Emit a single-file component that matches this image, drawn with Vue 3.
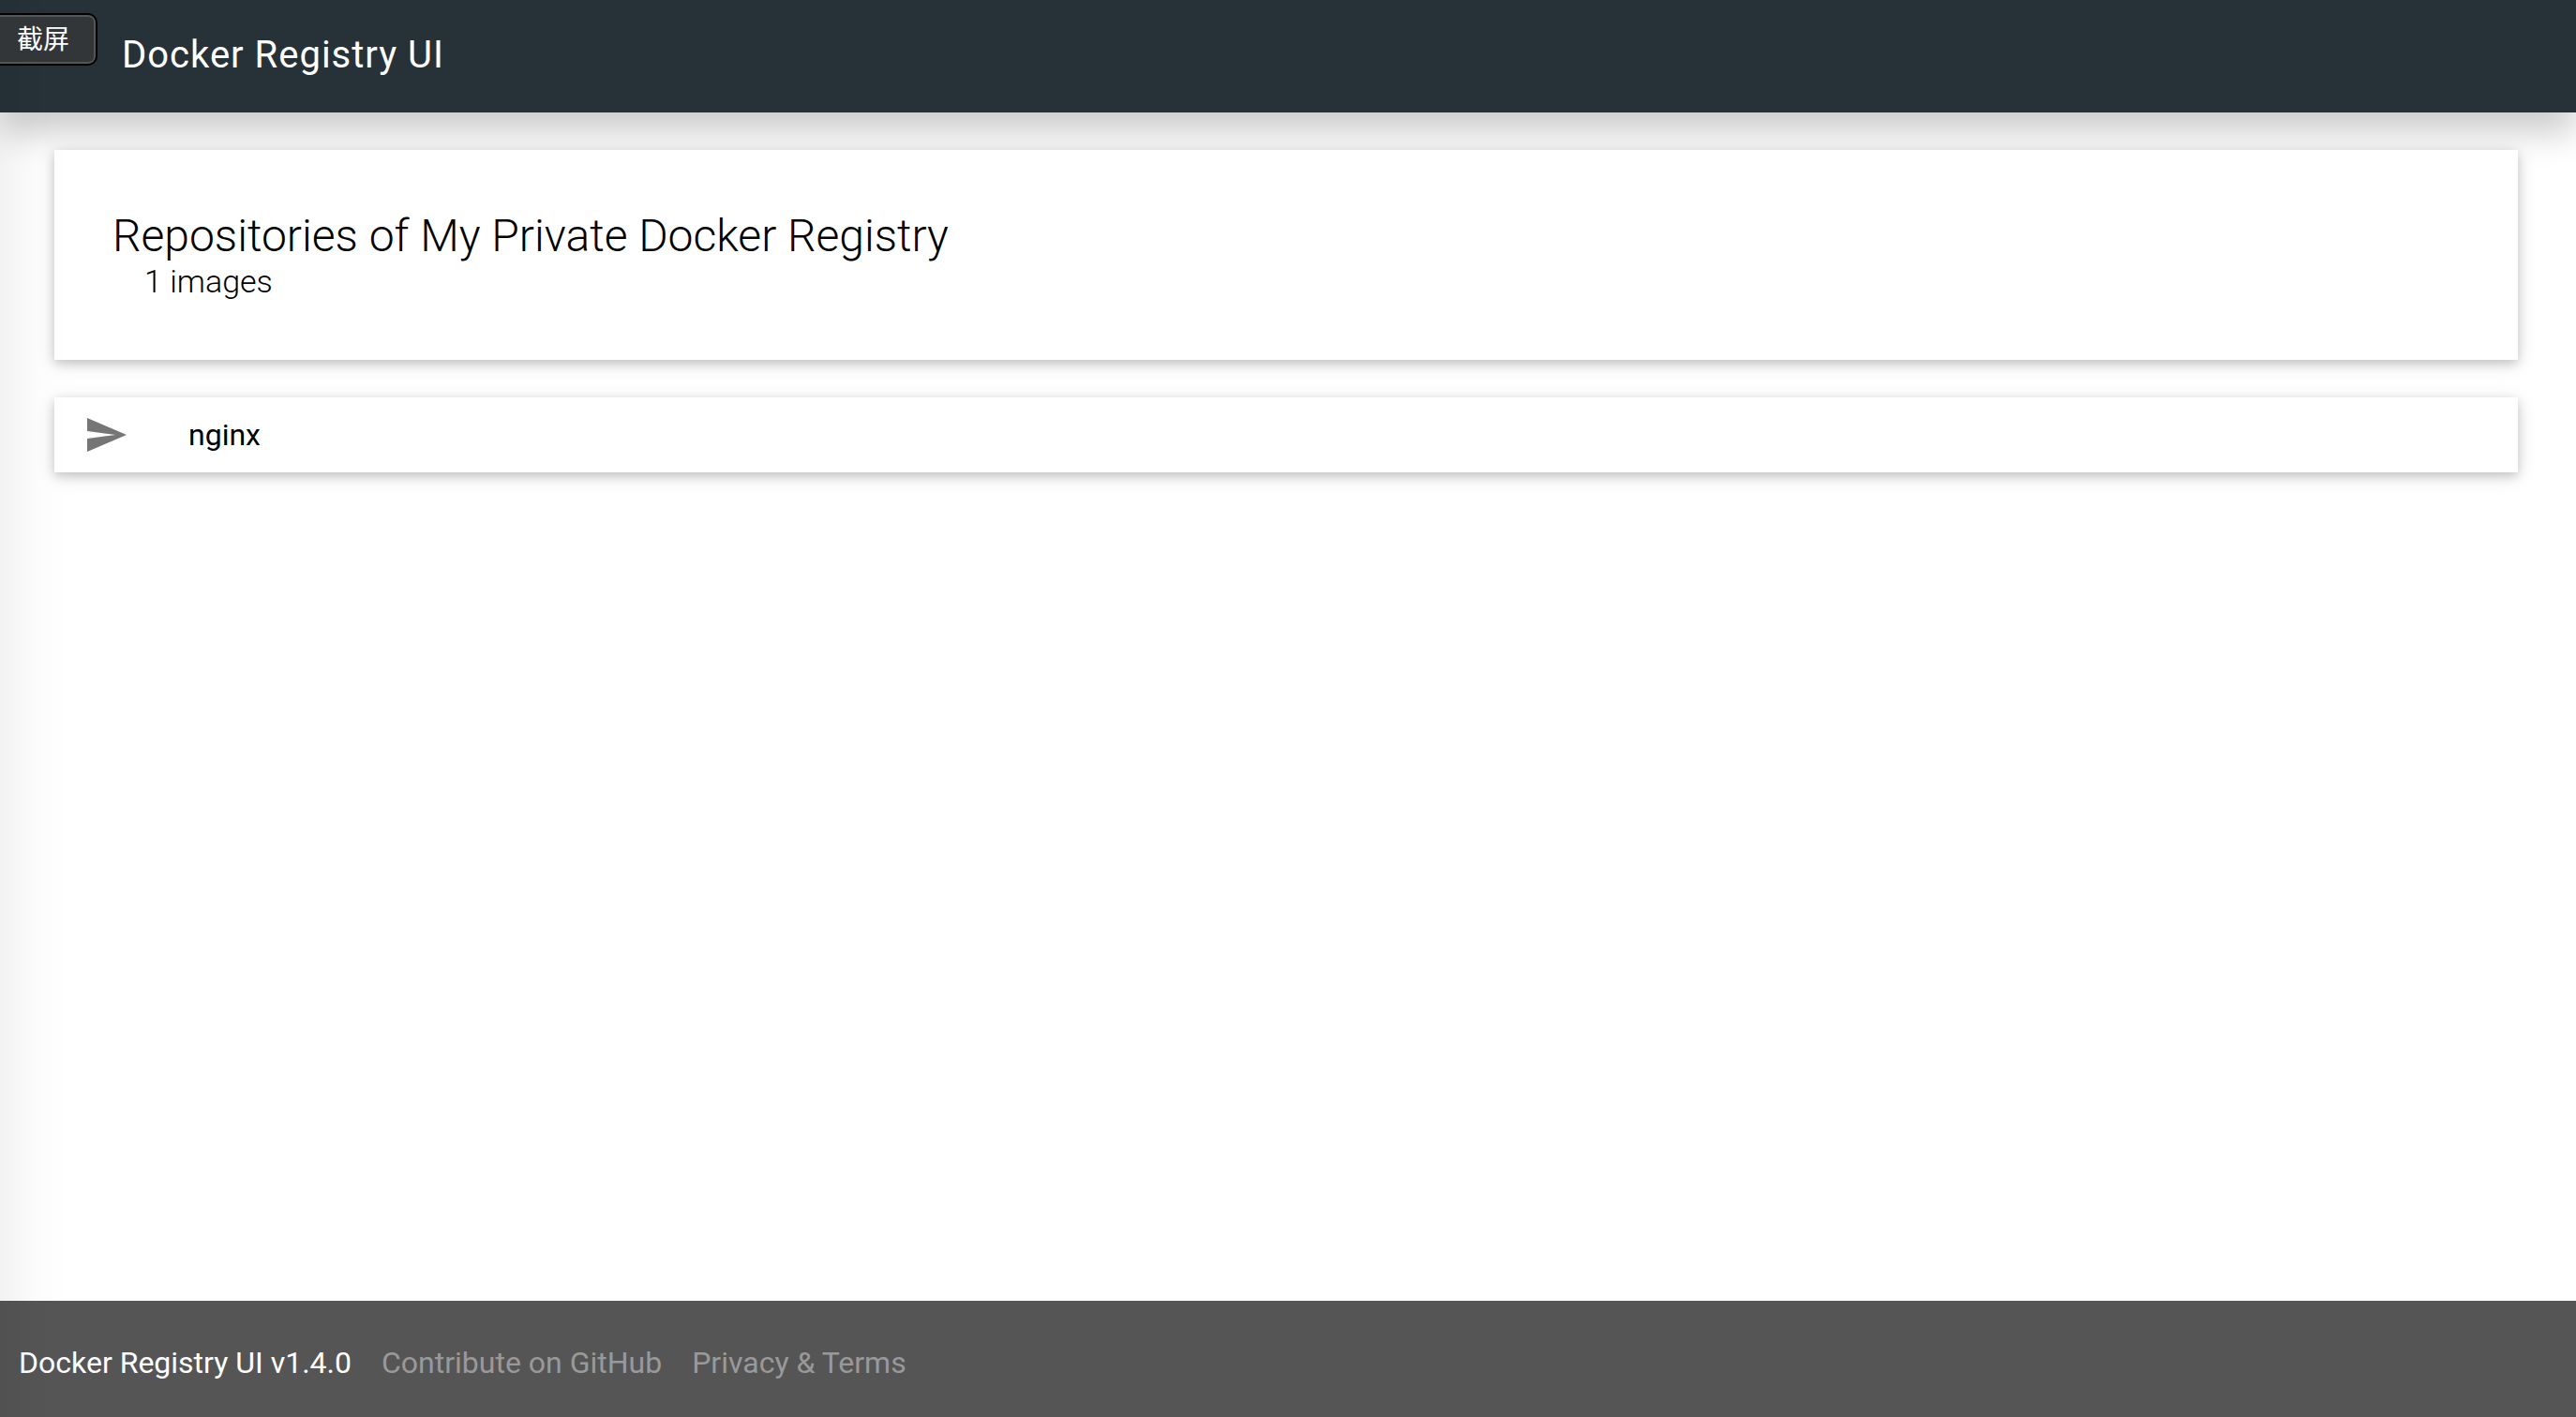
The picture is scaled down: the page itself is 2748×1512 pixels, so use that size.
<script setup>
import { ref } from 'vue'

const repositories = ref([{ name: 'nginx' }])
const links = [
  { label: 'Contribute on GitHub', href: '#github' },
  { label: 'Privacy & Terms', href: '#privacy' },
]
</script>

<template>
  <div class="page">
    <header class="navbar">
      <h1 class="brand">Docker Registry UI</h1>
    </header>

    <main class="content">
      <section class="card summary">
        <h2 class="title">Repositories of My Private Docker Registry</h2>
        <p class="count">{{ repositories.length }} images</p>
      </section>

      <ul class="card list">
        <li v-for="repo in repositories" :key="repo.name">
          <a class="repo" href="#repository">
            <svg class="icon" viewBox="0 0 24 24" aria-hidden="true">
              <path d="M2.01 21L23 12 2.01 3 2 10l15 2-15 2z" />
            </svg>
            <span>{{ repo.name }}</span>
          </a>
        </li>
      </ul>
    </main>

    <footer class="footer">
      <span class="version">Docker Registry UI v1.4.0</span>
      <nav class="links">
        <a v-for="link in links" :key="link.label" :href="link.href">{{ link.label }}</a>
      </nav>
    </footer>

    <div class="edge-shade"></div>
    <div class="tooltip" role="tooltip">截屏</div>
  </div>
</template>

<style>
body {
  background: #fff;
}
</style>

<style scoped>
.page {
  display: flex;
  flex-direction: column;
  min-height: 100vh;
  position: relative;
  overflow: hidden;
  background: #fff;
  color: #000;
  font-family: Roboto, "Liberation Sans", sans-serif;
  font-size: 32px;
}

.navbar {
  display: flex;
  align-items: center;
  box-sizing: border-box;
  height: 120px;
  padding: 0 130px 2px;
  background: #263238;
  color: #fff;
  box-shadow: 0 22px 34px 0 rgba(0, 0, 0, 0.2);
}

.brand {
  margin: 0;
  font-size: 40px;
  font-weight: 400;
  line-height: 48px;
  letter-spacing: 1px;
}

.content {
  display: flex;
  flex: 1;
  flex-direction: column;
  gap: 40px;
  padding: 40px 62px 40px 58px;
}

.card {
  background: #fff;
  box-shadow: 0 4px 10px 0 rgba(0, 0, 0, 0.16), 0 4px 20px 0 rgba(0, 0, 0, 0.12);
}

.summary {
  padding: 64px 62px;
}

.title {
  margin: 0;
  font-size: 48px;
  font-weight: 300;
  line-height: 56px;
}

.count {
  margin: 0;
  padding-left: 34px;
  font-size: 34px;
  font-weight: 300;
  line-height: 40px;
}

.list {
  margin: 0;
  padding: 0;
  list-style: none;
}

.repo {
  display: flex;
  align-items: center;
  gap: 64px;
  height: 80px;
  padding: 0 31px;
  color: #000;
  text-decoration: none;
}

.icon {
  width: 48px;
  height: 48px;
  fill: #757575;
}

.footer {
  display: flex;
  align-items: center;
  gap: 32px;
  box-sizing: border-box;
  height: 124px;
  padding: 8px 20px 0;
  background: #555;
  color: #fff;
}

.links {
  display: flex;
  gap: 32px;
}

.links a {
  color: #999;
  text-decoration: none;
}

.edge-shade {
  position: absolute;
  top: 0;
  bottom: 0;
  left: 0;
  width: 72px;
  background: linear-gradient(to right, rgba(0, 0, 0, 0.05), rgba(0, 0, 0, 0.01) 55%, transparent);
  pointer-events: none;
}

.tooltip {
  position: absolute;
  top: 14px;
  left: 0;
  box-sizing: border-box;
  height: 56px;
  padding: 0 28px 0 18px;
  border: 2px solid #000;
  border-left: 0;
  border-radius: 0 10px 10px 0;
  background: #323638;
  box-shadow: inset -2px 0 #54575a, inset 0 2px #54575a, inset 0 -2px #54575a;
  color: #fff;
  font-family: "Noto Sans CJK SC", sans-serif;
  font-size: 28px;
  line-height: 48px;
}
</style>
